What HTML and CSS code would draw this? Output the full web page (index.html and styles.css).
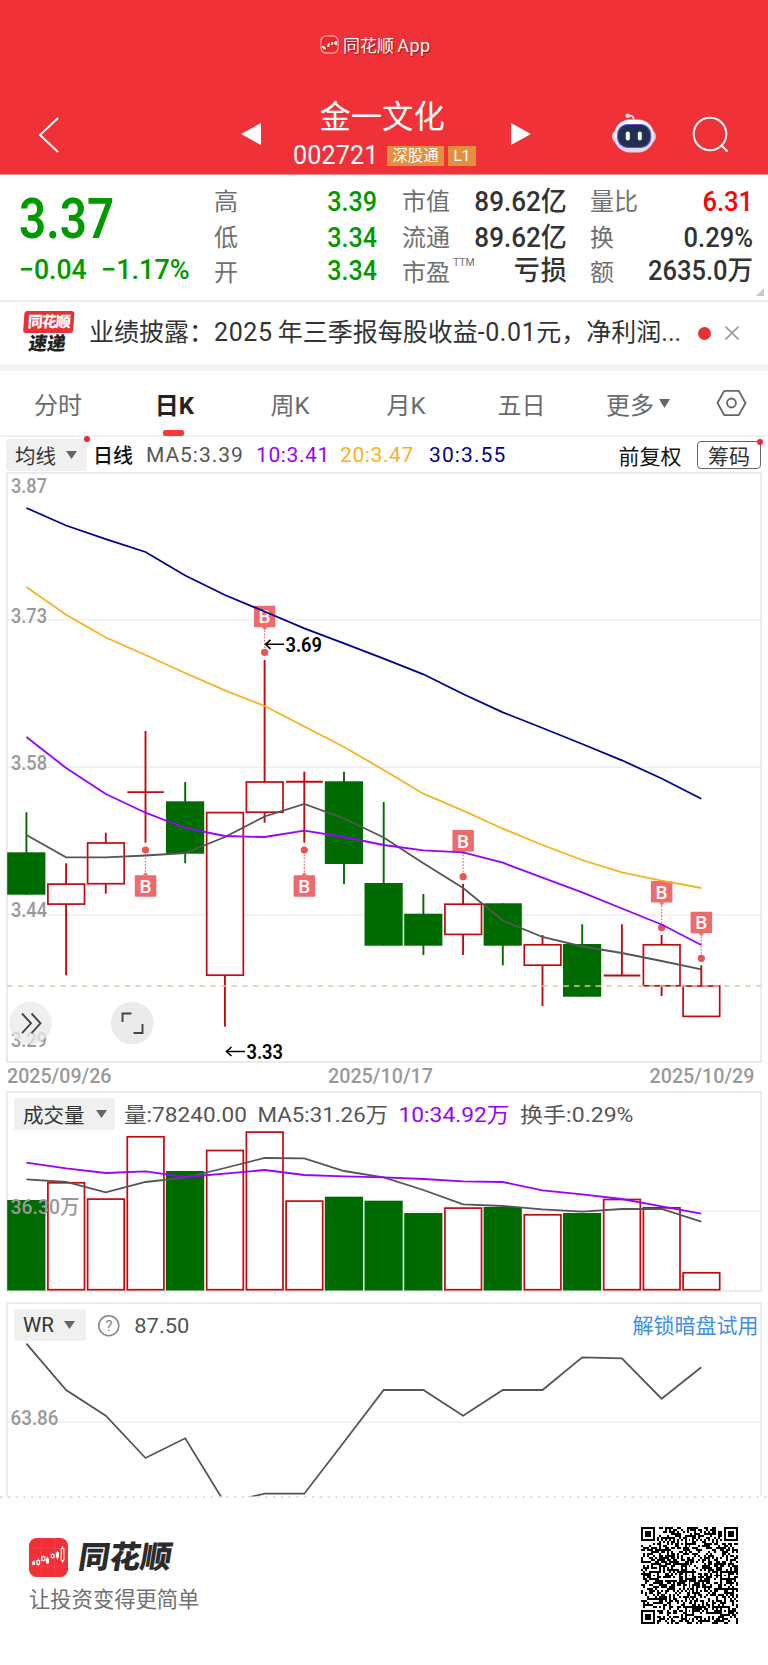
FILE: index.html
```html
<!DOCTYPE html>
<html lang="zh-CN">
<head>
<meta charset="utf-8">
<title>金一文化 002721</title>
<link rel="stylesheet" href="styles.css">
</head>
<body>
<header class="top">
  <div class="brand">
    <svg class="brand-icon" viewBox="0 0 19 19"><rect x="1" y="1" width="17" height="17" rx="5" fill="#e8262c" stroke="#ff9b98" stroke-width="1.3"/><path d="M2 12h2v1.500h2M7 11h1.500V9H10M12 10V7M14 8h1.500M16 6v4" fill="none" stroke="#fff" stroke-width="1.700"/></svg>
    <span>同花顺 <span class="app-word">App</span></span>
  </div>
  <nav class="navbar">
    <svg class="back" viewBox="0 0 24 38"><path d="M21 2 3 19l18 17" fill="none" stroke="#fff" stroke-width="2"/></svg>
    <svg class="tri prev" viewBox="0 0 20 22"><path d="M20 0v22L0 11z" fill="#fff"/></svg>
    <div class="title">
      <h1>金一文化</h1>
      <div class="code"><span class="num">002721</span><em class="tag">深股通</em><em class="tag tag-l">L1</em></div>
    </div>
    <svg class="tri next" viewBox="0 0 20 22"><path d="M0 0v22l20-11z" fill="#fff"/></svg>
    <svg class="robot" viewBox="0 0 44 40">
      <defs><linearGradient id="rb" x1="0" y1="0" x2="0" y2="1"><stop offset="0" stop-color="#fff"/><stop offset=".6" stop-color="#ece6fa"/><stop offset="1" stop-color="#d9d5ea"/></linearGradient></defs>
      <path d="M16 3q6-1.500 6 5" fill="none" stroke="#f6dfe8" stroke-width="1.800"/><circle cx="15.700" cy="2.700" r="2.300" fill="#f3dfe9"/>
      <rect x="0" y="17" width="44" height="13" rx="6" fill="#c9c8ee"/>
      <rect x="2" y="6.500" width="40" height="33" rx="16" fill="url(#rb)"/>
      <rect x="5.700" y="11.500" width="33" height="23" rx="10" fill="#222f50" stroke="#6c51c8" stroke-width="1.200"/>
      <rect x="13.800" y="18.500" width="4" height="9" rx="2" fill="#fff"/><rect x="25.800" y="18.500" width="4" height="9" rx="2" fill="#fff"/>
    </svg>
    <svg class="search" viewBox="0 0 37 37"><circle cx="18" cy="18" r="16.300" fill="none" stroke="#fff" stroke-width="2"/><path d="m29 29 6.500 6.500" stroke="#fff" stroke-width="2.200"/></svg>
  </nav>
</header>

<section class="quote">
  <div class="price">
    <div class="last"><span>3.37</span></div>
    <div class="delta"><span>−0.04</span><span>−1.17%</span></div>
  </div>
  <dl class="stats s1">
    <dt>高</dt><dd class="g">3.39</dd>
    <dt>低</dt><dd class="g">3.34</dd>
    <dt>开</dt><dd class="g">3.34</dd>
  </dl>
  <dl class="stats s2">
    <dt>市值</dt><dd>89.62<i>亿</i></dd>
    <dt>流通</dt><dd>89.62<i>亿</i></dd>
    <dt>市盈<sup>TTM</sup></dt><dd><i>亏损</i></dd>
  </dl>
  <dl class="stats s3">
    <dt>量比</dt><dd class="r">6.31</dd>
    <dt>换</dt><dd>0.29%</dd>
    <dt>额</dt><dd>2635.0<i>万</i></dd>
  </dl>
  <svg class="corner" viewBox="0 0 8 8"><path d="M8 0v8H0z" fill="#c8c8c8"/></svg>
</section>

<section class="news">
  <div class="news-logo"><b>同花顺</b><strong>速递</strong></div>
  <p>业绩披露：<span class="yr">2025</span>年三季报每股收益<span class="eps">-0.01</span>元，净利润...</p>
  <i class="dot"></i>
  <svg class="close" viewBox="0 0 14 14"><path d="m.5.5 13 13m0-13-13 13" stroke="#999" stroke-width="1.600"/></svg>
</section>

<nav class="tabs">
  <a>分时</a><a class="on">日K</a><a>周K</a><a>月K</a><a>五日</a><a class="more">更多<svg viewBox="0 0 11 9"><path d="M0 0h11L5.500 9z" fill="#666"/></svg></a>
  <svg class="hex" viewBox="0 0 32 28"><path d="M8.500 1.500h15L30.500 14l-7 12.500h-15L1.500 14z" fill="none" stroke="#666" stroke-width="1.900" stroke-linejoin="round"/><circle cx="16" cy="14" r="4.600" fill="none" stroke="#666" stroke-width="1.900"/></svg>
</nav>

<section class="legend">
  <button class="pick ma">均线<svg viewBox="0 0 11 8"><path d="M0 0h11L5.500 8z" fill="#666"/></svg></button>
  <span class="day">日线</span>
  <span class="m m5">MA5:3.39</span><span class="m m10">10:3.41</span><span class="m m20">20:3.47</span><span class="m m30">30:3.55</span>
  <span class="fq">前复权</span>
  <button class="chip">筹码</button>
</section>

<svg class="chart kline" id="kline" viewBox="0 472 768 618"></svg>

<section class="panel vol">
  <svg class="chart" id="volume" viewBox="0 1091 768 201"></svg>
  <div class="panel-head">
    <button class="pick volb">成交量<svg viewBox="0 0 11 8"><path d="M0 0h11L5.500 8z" fill="#666"/></svg></button>
  </div>
</section>

<section class="panel wr">
  <svg class="chart" id="wr" viewBox="0 1302 768 196"></svg>
  <div class="panel-head">
    <button class="pick wrb">WR<svg viewBox="0 0 11 8"><path d="M0 0h11L5.500 8z" fill="#666"/></svg></button>
  </div>
</section>

<footer class="foot">
  <div>
    <div class="foot-brand">
      <svg class="app" viewBox="0 0 38 38"><rect width="38" height="38" rx="7.500" fill="#f03036"/><path d="M0 10h38M0 19h38M0 28h38M12 0v38M25 0v38" stroke="#f6494d" stroke-width=".6"/>
        <g fill="none" stroke="#fff" stroke-width="1.100"><path d="M4.500 22v4M9 20v7M14 17v6M18 18v7M23 15v5M27.700 13v8M32.700 8v16" /><rect x="7.700" y="22" width="2.600" height="3.500" fill="#f03036"/><rect x="12.500" y="18.300" width="3" height="3.500" fill="#f03036"/><rect x="21.700" y="16" width="2.600" height="3" fill="#f03036"/><rect x="31.400" y="10" width="2.600" height="12" rx="1" fill="#f03036"/></g>
        <path d="M3 23h3v3H3zM16.500 20h3v4.500h-3zM26.200 14h3v5h-3z" fill="#fff"/></svg>
      <b>同花顺</b>
    </div>
    <p>让投资变得更简单</p>
  </div>
  <svg class="qr" id="qr" viewBox="0 0 49 49" shape-rendering="crispEdges"></svg>
</footer>
<script src="charts.js"></script>
</body>
</html>
```
FILE: styles.css
```css
* { box-sizing: border-box; }
body { margin: 0; width: 768px; height: 1665px; overflow: hidden; background: #fff; color: #333; font-family: Roboto, "Noto Sans CJK SC", sans-serif; }
h1, p, dl, dd { margin: 0; }
i, em { font-style: normal; }
svg { display: block; flex: none; }
button { font: inherit; border: 0; padding: 0; color: #333; display: flex; align-items: center; }

.top { height: 175px; background: #f03138; color: #fff; border-bottom: 1px solid #e48a8d; }
.brand { height: 88px; padding-left: 320px; display: flex; align-items: center; gap: 4px; font-size: 17px; text-shadow: 1px 1px 1px #8c1515; white-space: nowrap; }
.brand-icon { width: 19px; height: 19px; }
.app-word { font-size: 18px; letter-spacing: .5px; margin-left: -1px; }
.navbar { display: flex; height: 86px; padding-top: 2px; }
.back { width: 24px; height: 38px; margin: 25.500px 0 0 37px; }
.tri { width: 20px; height: 22px; margin-top: 33px; }
.prev { margin-left: 179.500px; }
.title { width: 250px; display: flex; flex-direction: column; align-items: flex-start; }
.title h1 { font-size: 31.300px; line-height: 38px; font-weight: 400; margin: 9px 0 0 59px; white-space: nowrap; }
.code { display: flex; align-items: center; margin: 6px 0 0 32.500px; height: 25px; }
.code .num { font-size: 25px; width: 94px; line-height: 24px; letter-spacing: .2px; }
.tag { background: #e2903f; font-size: 15.400px; line-height: 20px; height: 20px; width: 57px; text-align: center; margin-right: 4px; white-space: nowrap; }
.tag-l { width: 28px; margin: 0; }
.robot { width: 44px; height: 40px; margin: 23px 0 0 81px; }
.search { width: 37px; height: 37px; margin: 26px 0 0 36px; }

.quote { height: 125px; display: flex; position: relative; }
.price { width: 214px; padding-left: 19px; color: #090; }
.last { font-size: 55px; line-height: 55px; height: 77px; padding-top: 16.500px; font-weight: 600; }
.last span { display: inline-block; transform: scaleX(.865); transform-origin: left; }
.delta { font-size: 28px; line-height: 32px; padding-top: 2px; font-weight: 500; display: flex; }
.delta span { display: block; width: 82px; transform: scaleX(.95); transform-origin: left; }
.delta span + span { transform: scaleX(.965); }
.stats { display: grid; grid-template-columns: auto 1fr; grid-auto-rows: 35.500px; padding-top: 9px; line-height: 36px; font-size: 24px; white-space: nowrap; }
.stats dt { color: #707070; }
.stats dd { text-align: right; font-size: 27px; font-weight: 500; transform: scaleX(.93); transform-origin: right; }
.stats dd:last-child { margin-top: -2px; }
.stats i { font-size: 27px; letter-spacing: 1px; margin-right: -1px; }
.stats .g { color: #090; }
.stats .r { color: #f00; }
.s1 { width: 163px; }
.s2 { width: 163px; margin-left: 25px; }
.s2 dd { transform: translateX(-4px) scaleX(.965); }
.s3 { width: 162px; margin-left: 25px; }
.s3 dd { transform: translateX(1px) scaleX(.945); }
.stats sup { font-size: 10.500px; line-height: 0; margin-left: 3px; vertical-align: 15px; }
.corner { position: absolute; right: 4px; bottom: 4px; width: 8px; height: 8px; }

.news { height: 71px; border-top: 2px solid #eee; border-bottom: 7px solid #f3f3f3; display: flex; align-items: center; padding-left: 23px; }
.news-logo { width: 50px; height: 44px; text-align: center; transform: skewX(-4deg); }
.news-logo b { display: block; background: #e93234; color: #fff; border-radius: 3px; font-size: 15px; line-height: 22px; font-weight: 900; letter-spacing: -1px; }
.news-logo strong { display: block; color: #222; font-size: 18.500px; line-height: 23px; font-weight: 900; transform: skewX(-5deg); }
.news p { margin-left: 16px; width: 593px; font-size: 25px; line-height: 32px; white-space: nowrap; letter-spacing: 0; }
.yr { letter-spacing: .6px; margin-right: 5px; }
.eps { letter-spacing: .6px; }
.news .dot { width: 13px; height: 13px; border-radius: 50%; background: #e83131; margin-left: 16px; }
.close { width: 14px; height: 14px; margin-left: 14px; }

.tabs { height: 66px; border-bottom: 2px solid #f0f0f0; display: grid; grid-template-columns: 116px 117px 114px 118px 113px 126px 64px; align-items: center; justify-items: center; font-size: 24px; color: #6b6b6b; }
.tabs a { position: relative; display: flex; align-items: center; white-space: nowrap; }
.tabs a svg { width: 11px; height: 9px; margin-left: 5px; }
.tabs .more { left: -3px; }
.tabs .on { color: #222; font-weight: 700; }
.tabs .on::after { content: ""; position: absolute; left: 50%; margin-left: -11px; bottom: -15px; width: 21px; height: 6px; border-radius: 2px; background: #f93a36; }
.hex { width: 31px; height: 28px; margin-right: 9px; }

.legend { height: 35px; display: flex; align-items: center; font-size: 21px; white-space: nowrap; padding-left: 6px; color: #111; }
.pick { background: #f0f0f0; border-radius: 3px; height: 32px; font-size: 20.500px; gap: 10px; padding-left: 9px; }
.pick svg { width: 11px; height: 8px; }
.ma, .chip { position: relative; }
.ma { width: 81px; }
.ma::after, .chip::after { content: ""; position: absolute; width: 6px; height: 6px; border-radius: 50%; background: #ee2638; right: -3px; top: -3px; }
.day { width: 53px; margin-left: 6px; font-size: 20px; font-weight: 500; }
.m { letter-spacing: .6px; }
.m5 { width: 110px; color: #555; letter-spacing: .95px; }
.m10 { width: 84px; color: #90f; }
.m20 { width: 89px; color: #fdb01f; }
.m30 { width: 189.500px; color: #00008f; letter-spacing: 1.100px; }
.fq { width: 78.500px; }
.chip { width: 64px; height: 28px; border: 1.500px solid #666; border-radius: 4px; background: #fff; justify-content: center; font-size: 21px; }

.chart { width: 768px; font-family: Roboto, "Noto Sans CJK SC", sans-serif; }
.kline { height: 618px; }
.panel { position: relative; }
.panel-head { position: absolute; left: 14px; top: 7px; }
.vol { height: 201px; margin-top: 1px; }
.wr { height: 196px; margin-top: 10px; }
.volb { width: 101px; gap: 11px; }
.wrb { width: 72px; gap: 10px; }
.axis { fill: #999; font-size: 20px; font-weight: 500; }
.note { fill: #000; font-size: 21px; font-weight: 600; }
.flag { fill: #fff; font-size: 19px; font-weight: 500; text-anchor: middle; }
.val { font-size: 21px; }

.foot { height: 167px; display: flex; justify-content: space-between; padding: 29px 30px 0 29px; }
.foot-brand { display: flex; align-items: center; height: 39px; margin-top: 11px; }
.app { width: 39px; height: 39px; }
.foot-brand b { font-size: 31px; line-height: 39px; margin-left: 10.500px; font-weight: 900; color: #2b2b2b; transform: skewX(-9deg); }
.foot p { font-size: 21.300px; line-height: 30px; margin-top: 8px; color: #707070; }
.qr { width: 97px; height: 97px; }
```
FILE: charts.js
```js
const px = i => 26.4 + 39.7 * i;
const RED = '#bf0a10', GREEN = '#006b00';
const line = (ys, color, w = 1.8) =>
  `<polyline fill="none" stroke="${color}" stroke-width="${w}" points="${ys.map((y, i) => px(i) + ',' + y).join(' ')}"/>`;
const hline = (y, c = '#eee') => `<path d="M7 ${y}H761" stroke="${c}" stroke-width="1.5"/>`;
const text = (cls, x, y, s, w, fill) =>
  `<text class="${cls}" x="${x}" y="${y}" textLength="${w}" lengthAdjust="spacingAndGlyphs"${fill ? ` fill="${fill}"` : ''}>${s}</text>`;
const bar = (i, top, bottom, up) => up
  ? `<rect x="${px(i) - 18.2}" y="${top + .8}" width="36.6" height="${bottom - top - 1.6}" fill="#fff" stroke="${RED}" stroke-width="1.7"/>`
  : `<rect x="${px(i) - 19.2}" y="${top}" width="38.2" height="${bottom - top}" fill="${GREEN}"/>`;

// [up, high, bodyTop, bodyBottom, low]
const candles = [
  [0,812.3,852.3,894.7,894.7],[1,863.3,883.3,904.9,975.3],[1,832.7,842.2,884.5,893.7],[1,731,791.3,792.9,842.7],
  [0,782,801.3,853.7,863.3],[1,812,811.8,976,1026.7],[1,660,781.2,813,822.7],[1,771.7,780.9,782.5,842.7],
  [0,771.7,781.3,864,884],[0,802,883,945.7,945.7],[0,894,913.7,945.7,955],[1,884,903.4,935.2,955],
  [0,903.3,903.3,945.7,965.3],[1,935,944,966,1006],[0,924.3,944,996.7,996.7],[1,924.3,974.7,976.3,975.7],
  [1,935,944,986.6,996],[1,965.3,985.2,1017.2,1017.2]];
let k = [619.7, 767.3, 914.7].map(y => hline(y)).join('') +
  '<rect x="7" y="472.800" width="754.200" height="589.200" fill="none" stroke="#e8e8e8" stroke-width="1.700"/>';
k += text('axis', 11, 493.2, '3.87', 36) + text('axis', 11, 622.7, '3.73', 36) +
  text('axis', 11, 770, '3.58', 36) + text('axis', 11, 917.4, '3.44', 36) + text('axis', 11, 1047.2, '3.29', 36);
candles.forEach(([up, hi, a, b, lo], i) => {
  k += `<path d="M${px(i)} ${hi}V${lo}" stroke="${up ? RED : GREEN}" stroke-width="1.9"/>`;
  k += b - a < 3 ? `<path d="M${px(i) - 18.2} ${(a + b) / 2}h36.6" stroke="${RED}" stroke-width="1.9"/>` : bar(i, a, b, up);
});
k += '<path d="M7 986H761" stroke="#dccaa8" stroke-width="1.400" stroke-dasharray="5.500 5.200"/>';
[[6,605.7,652.3],[11,830,876.7],[16,881,927.7],[17,911.7,958.3],[3,875.3,850],[7,875.3,850]].forEach(([i, top, dot]) => {
  const x = px(i), up = dot > top, edge = up ? top + 21.5 : top;
  k += `<path d="M${x} ${edge}V${dot}" stroke="#ef6a6c" stroke-width="1.2" stroke-dasharray="1.6 1.6"/>
    <circle cx="${x}" cy="${dot}" r="3.600" fill="#ee5255"/>
    <path d="M${x - 3} ${edge}h6l-3 ${up ? 3 : -3}z" fill="#ef6a6c"/>
    <rect x="${x - 10.7}" y="${top}" width="21.500" height="21.500" rx="1" fill="#ef6a6c"/>
    <text class="flag" x="${x}" y="${top + 17.5}">B</text>`;
});
k += line([835,857.3,857.3,855.5,853,837,816.5,804,818.5,837.5,863.3,888,920.5,937,946.5,953,961,969.3], '#555');
k += line([737,768,794,812.7,828,836,837,830.7,837,845,850.3,852.3,862.7,877.7,892.3,908.5,924.5,945], '#90f');
k += line([587,614.7,637.5,655,673,690.3,706,726.5,747,770,793.7,810.7,828.7,845,860,872.3,880.7,888], '#fdb01f');
k += line([508,525.5,539.2,552,575.5,595,611.5,628.3,643.3,658.7,674.3,694,712.3,728,744,760.3,778.5,798.7], '#00008f');
k += `<path d="M284 644.300H265.500m5-4.500-5 4.500 5 4.500M245 1051.500H226.500m5-4.500-5 4.500 5 4.500" fill="none" stroke="#000" stroke-width="1.600"/>`;
k += text('note', 285.5, 652, '3.69', 36.5) + text('note', 246.5, 1059, '3.33', 36.5);
k += `<circle cx="30.500" cy="1023" r="21.300" fill="#e9e9e9" fill-opacity=".75"/><circle cx="132.300" cy="1023" r="21.300" fill="#ebebeb"/>
  <path d="m22 1013.500 9 9.800-9 9.800m9.500-19.600 9 9.800-9 9.800M122.500 1022v-8.500h9M133.500 1033h9v-9" fill="none" stroke="#444" stroke-width="1.900"/>`;
k += text('axis', 7, 1083.3, '2025/09/26', 104.5) + text('axis', 328, 1083.3, '2025/10/17', 105) + text('axis', 649.5, 1083.3, '2025/10/29', 105);
document.getElementById('kline').innerHTML = k;

// [up, top]
const volumes = [[0,1200],[1,1182],[1,1198.3],[1,1136],[0,1171],[1,1149.7],[1,1131.3],[1,1200.3],[0,1196.7],[0,1200.7],[0,1213],
  [1,1207.3],[0,1207],[1,1214],[0,1213],[1,1198.7],[1,1207],[1,1272]];
let v = '<rect x="7" y="1091.800" width="754.200" height="199.200" fill="none" stroke="#e8e8e8" stroke-width="1.700"/>' + hline(1211);
v += volumes.map(([up, top], i) => bar(i, top, 1290.5, up)).join('');
v += text('axis', 10.5, 1213.8, '36.30万', 69);
v += line([1179.3,1182,1192.3,1182,1177.7,1168,1158,1158.3,1171,1177.3,1190,1204.3,1206,1209.3,1211.7,1209,1209,1221.7], '#555');
v += line([1162.7,1168.3,1173,1171.3,1177,1173.7,1170,1175,1176.3,1177.3,1179,1181.3,1182,1190.3,1194.3,1199,1206.3,1213.7], '#90f');
v += text('val', 124, 1122.3, '量:78240.00', 123, '#555') + text('val', 257.500, 1122.3, 'MA5:31.26万', 130.5, '#555') +
  text('val', 398.5, 1122.3, '10:34.92万', 111, '#90f') + text('val', 520, 1122.3, '换手:0.29%', 113.5, '#555');
document.getElementById('volume').innerHTML = v;

let w = '<path d="M7 1498V1303H761.200V1498" fill="none" stroke="#e8e8e8" stroke-width="1.700"/>' + hline(1422.3);
w += text('axis', 10.500, 1425.3, '63.86', 48);
w += line([1343.7,1390,1415.7,1458,1438.3,1503,1493.7,1493.7,1442,1390,1390,1415.7,1390,1390,1357.3,1358.3,1398.7,1367.3], '#555');
w += '<rect x="0" y="1496.500" width="768" height="3" fill="#fff"/><path d="M0 1497H768" stroke="#ddd" stroke-width="1.800" stroke-dasharray="2 5.800"/>';
w += `<circle cx="108.800" cy="1325.700" r="10" fill="none" stroke="#888" stroke-width="1.500"/><text x="108.800" y="1331.300" font-size="15.500" text-anchor="middle" fill="#888">?</text>`;
w += text('val', 134.3, 1333.3, '87.50', 55, '#555') + text('val', 632.5, 1333.3, '解锁暗盘试用', 126, '#3d8ee8');
document.getElementById('wr').innerHTML = w;

// QR symbol, 49 modules a side
const N = 49, grid = [];
let seed = 20251029;
for (let y = 0; y < N; y++) for (let x = 0; x < N; x++) {
  seed = (seed * 1103515245 + 12345) % 2147483648;
  grid.push((seed >> 16) & 1);
}
const ring = (cx, cy, r, on) => {
  for (let y = -r; y <= r; y++) for (let x = -r; x <= r; x++) {
    const X = cx + x, Y = cy + y;
    if (X >= 0 && Y >= 0 && X < N && Y < N) grid[Y * N + X] = on(Math.max(Math.abs(x), Math.abs(y)));
  }
};
for (let i = 0; i < N; i++) { grid[6 * N + i] = grid[i * N + 6] = i % 2 ? 0 : 1; }
[[24,6],[6,24],[24,24],[42,24],[24,42],[42,42]].forEach(([x, y]) => ring(x, y, 2, d => d === 1 ? 0 : 1));
[[3,3],[45,3],[3,45]].forEach(([x, y]) => ring(x, y, 4, d => d === 2 || d === 4 ? 0 : 1));
document.getElementById('qr').innerHTML =
  '<path d="' + grid.map((b, i) => b ? `M${i % N} ${Math.floor(i / N)}h1v1h-1z` : '').join('') + '"/>';
```
